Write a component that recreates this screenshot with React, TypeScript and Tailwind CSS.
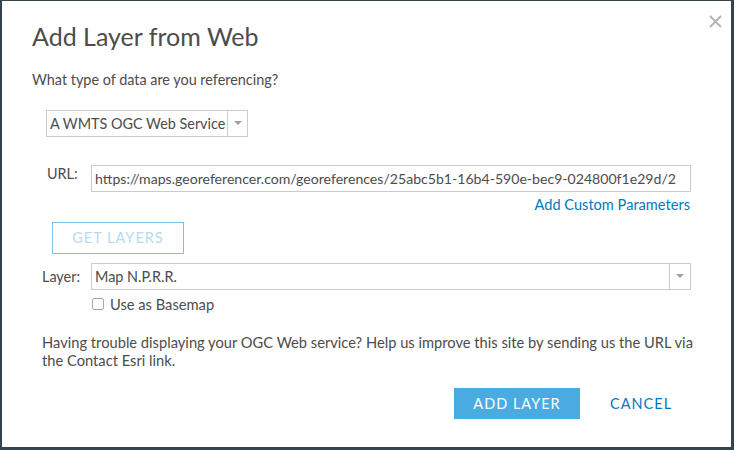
import React from "react";

const font = { fontFamily: "Lato, 'Open Sans', sans-serif" };

export default function App() {
  return (
    <div className="w-[734px] h-[450px] bg-[#33444d] pt-[1px] pl-[2px] pr-[3px] pb-[3px]" style={font}>
      <div className="relative w-[729px] h-[446px] bg-white text-[#4c4c4c]">
        <button className="absolute left-[705px] top-[12px] w-[16px] h-[16px] flex items-center justify-center">
          <svg width="13" height="13" viewBox="0 0 13 13">
            <path d="M1 1 L12 12 M12 1 L1 12" stroke="#b3b3b3" strokeWidth="1.8" />
          </svg>
        </button>
        <div className="pl-[30px] pr-[40px] pt-[20px]">
          <h1 className="text-[25px] leading-[30px] text-[#4c4c4c]">Add Layer from Web</h1>
          <p className="mt-[20px] text-[14.4px] leading-[18px]">What type of data are you referencing?</p>
          <div className="mt-[21px] ml-[14px] flex h-[27px] w-[202px] border border-[#cccccc]">
            <div className="flex-1 pl-[3px] text-[14.4px] leading-[25px] text-[#4c4c4c] whitespace-nowrap">A WMTS OGC Web Service</div>
            <div className="w-[20px] border-l border-[#cccccc] flex items-center justify-center">
              <svg width="8" height="5" viewBox="0 0 8 5"><path d="M0 0 L8 0 L4 4 Z" fill="#a0a0a0" /></svg>
            </div>
          </div>
          <div className="mt-[28px] flex items-start">
            <span className="ml-[15px] w-[44px] text-[14.4px] leading-[16px] pt-[1px]">URL:</span>
            <div className="w-[600px] h-[27px] border border-[#cccccc] overflow-hidden">
              <div className="pl-[3px] text-[14.1px] leading-[25px] whitespace-nowrap text-[#4c4c4c]">
                https://maps.georeferencer.com/georeferences/25abc5b1-16b4-590e-bec9-024800f1e29d/2
              </div>
            </div>
          </div>
          <div className="flex justify-end w-[658px] mt-[4px]">
            <a className="text-[14.6px] leading-[18px] text-[#0079c1]">Add Custom Parameters</a>
          </div>
          <button className="mt-[8px] ml-[20px] w-[132px] h-[32px] border border-[#7fc0e4] text-[#b6dbf0] text-[14.5px] tracking-[1px] flex items-center justify-center">
            GET LAYERS
          </button>
          <div className="mt-[9px] flex items-center">
            <span className="ml-[10px] w-[49px] text-[14.4px]">Layer:</span>
            <div className="flex w-[600px] h-[27px] border border-[#cccccc]">
              <div className="flex-1 pl-[3px] text-[14.4px] leading-[25px]">Map N.P.R.R.</div>
              <div className="w-[21px] border-l border-[#cccccc] flex items-center justify-center">
                <svg width="8" height="5" viewBox="0 0 8 5"><path d="M0 0 L8 0 L4 4 Z" fill="#a0a0a0" /></svg>
              </div>
            </div>
          </div>
          <label className="mt-[5px] ml-[60px] flex items-center gap-[6px]">
            <span className="w-[12px] h-[12px] border border-[#a8a8a8] rounded-[2px] bg-white" />
            <span className="text-[14.7px] leading-[18px]">Use as Basemap</span>
          </label>
          <p className="mt-[20px] ml-[10px] w-[660px] text-[14.7px] leading-[18px]">
            Having trouble displaying your OGC Web service? Help us improve this site by sending us the URL via the Contact Esri link.
          </p>
          <div className="mt-[19px] flex items-center">
            <button className="ml-[422px] w-[126px] h-[31px] bg-[#49abdf] text-white text-[14.5px] tracking-[1px]">ADD LAYER</button>
            <button className="ml-[30px] text-[14.5px] text-[#0079c1] tracking-[1px]">CANCEL</button>
          </div>
        </div>
      </div>
    </div>
  );
}
